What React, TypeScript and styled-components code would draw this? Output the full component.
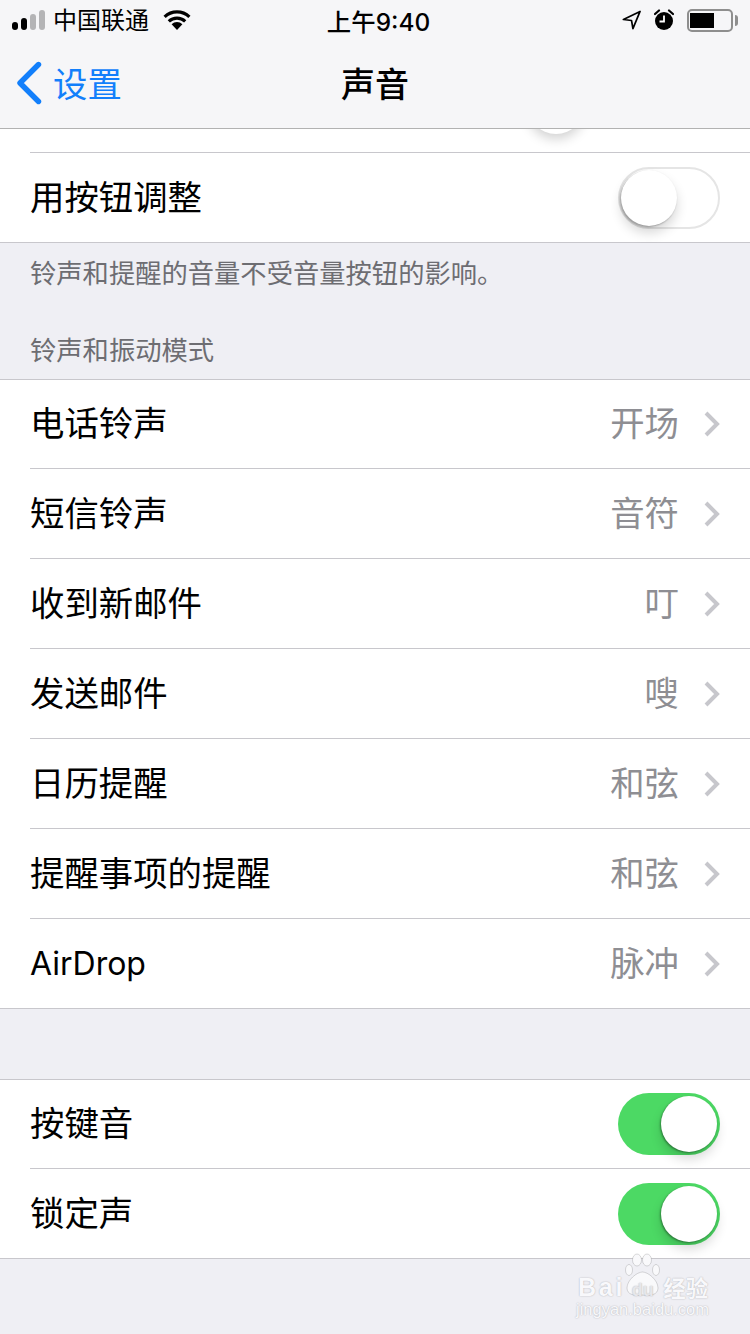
import React from 'react';
import styled, { createGlobalStyle } from 'styled-components';

const CJK = '"Noto Sans CJK SC", "Noto Sans", sans-serif';
const LATIN = 'Inter, "Noto Sans CJK SC", sans-serif';

const GlobalStyle = createGlobalStyle`
  html, body { margin: 0; padding: 0; }
  body { background: #efeff4; font-family: ${CJK}; }
`;

const Page = styled.div`
  position: relative;
  width: 750px;
  height: 1334px;
  overflow: hidden;
  background: #efeff4;
  color: #000;
`;

const TopBar = styled.header`
  height: 128px;
  background: #f6f6f8;
  border-bottom: 1px solid #b2b2b2;
  position: relative;
  z-index: 2;
`;

const StatusBar = styled.div`
  height: 40px;
  display: grid;
  grid-template-columns: 1fr auto 1fr;
  align-items: center;
  padding: 0 14px 0 12px;
`;

const StatusLeft = styled.div`
  display: flex;
  align-items: center;
  gap: 8px;
`;

const StatusRight = styled.div`
  display: flex;
  align-items: center;
  justify-content: flex-end;
  gap: 13px;
`;

const Carrier = styled.span`
  font-size: 24px;
  line-height: 36px;
  margin: -2px 6px 0 0;
`;

const Clock = styled.span`
  font-family: ${LATIN};
  font-size: 24.4px;
  line-height: 34px;
  font-weight: 500;
  margin: 4px 0 0 9px;
`;

const SignalBars = styled.div`
  display: flex;
  align-items: flex-end;
  gap: 3px;
  height: 20px;
`;

const SignalBar = styled.i<{ $h: number; $on: boolean }>`
  display: block;
  width: 6px;
  height: ${p => p.$h}px;
  border-radius: 3px;
  background: ${p => (p.$on ? '#000' : '#b4b4b6')};
`;

const Battery = styled.div`
  width: 46px;
  height: 23px;
  box-sizing: border-box;
  border: 2px solid #8e8e8e;
  border-radius: 5px;
  padding: 2px 1px;
  position: relative;
  margin-right: 3px;
  &::after {
    content: '';
    position: absolute;
    right: -7px;
    top: 4px;
    width: 3px;
    height: 11px;
    background: #8e8e8e;
    border-radius: 0 3px 3px 0;
  }
`;

const BatteryLevel = styled.div`
  width: 24px;
  height: 100%;
  background: #000;
`;

const NavBar = styled.nav`
  height: 88px;
  display: grid;
  grid-template-columns: 1fr auto 1fr;
  align-items: center;
`;

const BackLink = styled.a`
  display: flex;
  align-items: center;
  gap: 11px;
  padding-left: 16px;
  margin-top: -2px;
  color: #127ffb;
  font-size: 34.4px;
  line-height: 84px;
`;

const BackText = styled.span`
  margin-top: -2px;
`;

const Title = styled.h1`
  margin: -2px 0 0;
  font-size: 34px;
  line-height: 84px;
  font-weight: 500;
`;

const Group = styled.section`
  position: relative;
  background: #fff;
  border-bottom: 1px solid #c8c7cc;
`;

const TopGroup = styled(Group)`
  padding-top: 23px;
`;

const ListGroup = styled(Group)`
  border-top: 1px solid #c8c7cc;
`;

const PeekKnob = styled.div`
  position: absolute;
  left: 527px;
  top: -53px;
  width: 58px;
  height: 58px;
  border-radius: 50%;
  background: #fff;
  box-shadow: 0 5px 12px rgba(0, 0, 0, 0.18);
`;

const Row = styled.div<{ $first?: boolean }>`
  height: ${p => (p.$first ? 88 : 89)}px;
  margin-left: 30px;
  padding-right: 30px;
  display: flex;
  align-items: center;
  justify-content: space-between;
  border-top: ${p => (p.$first ? 'none' : '1px solid #c8c7cc')};
`;

const Label = styled.span`
  font-size: 34.4px;
  line-height: 48px;
  margin-top: -6px;
`;

const LatinLabel = styled(Label)`
  font-family: ${LATIN};
  font-size: 32px;
  margin-top: 0;
`;

const Detail = styled.div`
  display: flex;
  align-items: center;
  gap: 23px;
`;

const Value = styled.span`
  font-size: 34.4px;
  line-height: 48px;
  color: #8e8e93;
  margin-top: -6px;
`;

const SwitchTrack = styled.div<{ $on: boolean }>`
  position: relative;
  width: 102px;
  height: 62px;
  box-sizing: border-box;
  border-radius: 31px;
  background: ${p => (p.$on ? '#4cd964' : '#fff')};
  border: ${p => (p.$on ? 'none' : '2px solid #e5e5e5')};
`;

const SwitchKnob = styled.div<{ $on: boolean }>`
  position: absolute;
  top: ${p => (p.$on ? 3 : 1)}px;
  ${p => (p.$on ? 'right: 3px;' : 'left: 1px;')}
  width: 56px;
  height: 56px;
  border-radius: 50%;
  background: #fff;
  box-shadow: -1px 1px 2px rgba(0, 0, 0, 0.35), 0 7px 12px rgba(0, 0, 0, 0.16);
`;

const Note = styled.p`
  margin: 0;
  padding: 10px 30px 0;
  height: 124px;
  box-sizing: border-box;
  font-size: 26.3px;
  line-height: 38px;
  color: #6d6d72;
`;

const SectionHeader = styled.h2`
  margin: -37px 0 0;
  padding: 0 30px;
  height: 49px;
  font-size: 26.3px;
  line-height: 38px;
  font-weight: 400;
  color: #6d6d72;
`;

const Spacer = styled.div`
  height: 70px;
`;

const Watermark = styled.div`
  position: absolute;
  left: 575px;
  top: 1252px;
  width: 136px;
  height: 68px;
  color: #f8f8fb;
  text-shadow: 0 0 1.5px rgba(0, 0, 0, 0.3);
  font-family: "Liberation Sans", sans-serif;
  z-index: 3;
`;

const WatermarkLine = styled.div`
  position: absolute;
  left: 3px;
  top: 18px;
  display: flex;
  align-items: center;
  white-space: nowrap;
  font-size: 25px;
  font-weight: 700;
  line-height: 28px;
  letter-spacing: 2.8px;
`;

const WatermarkDu = styled.span`
  position: relative;
  font-size: 18px;
  width: 35px;
  margin-right: 3px;
  margin-top: 6px;
  letter-spacing: 0;
  text-align: center;
  color: #e6e6ea;
`;

const WatermarkCn = styled.span`
  font-family: ${CJK};
  font-size: 22.5px;
  line-height: 26px;
  font-weight: 700;
  letter-spacing: 0;
`;

const WatermarkUrl = styled.div`
  position: absolute;
  left: 1px;
  top: 50px;
  font-size: 16.5px;
  line-height: 14px;
  white-space: nowrap;
`;

const PawSvg = styled.svg`
  position: absolute;
  left: 50px;
  top: 0;
`;

const Chevron = () => (
  <svg width="18" height="28" viewBox="0 0 18 28">
    <path d="M4 3 L15 14 L4 25" fill="none" stroke="#c7c7cc" strokeWidth="4" />
  </svg>
);

const WifiIcon = () => (
  <svg width="28" height="20" viewBox="0 0 28 20">
    <path d="M14 20 L8.6 14.2 A8 8 0 0 1 19.4 14.2 Z" fill="#000" />
    <path d="M5.8 11.4 A12 12 0 0 1 22.2 11.4" fill="none" stroke="#000" strokeWidth="3.2" />
    <path d="M1.6 6.8 A18 18 0 0 1 26.4 6.8" fill="none" stroke="#000" strokeWidth="3.2" />
  </svg>
);

const LocationIcon = () => (
  <svg width="19" height="20" viewBox="0 0 20 20">
    <path d="M19 1 L1.5 9.5 L10 10.5 L11.5 19 Z" fill="none" stroke="#000" strokeWidth="1.8" strokeLinejoin="round" />
  </svg>
);

const AlarmIcon = () => (
  <svg width="20" height="22" viewBox="0 0 20 22">
    <circle cx="10" cy="12" r="9" fill="#000" />
    <path d="M10 6.5 V12.5 H5.5" fill="none" stroke="#fff" strokeWidth="1.8" />
    <path d="M1 5 L5 1.5 M19 5 L15 1.5" stroke="#000" strokeWidth="2.2" strokeLinecap="round" />
  </svg>
);

const BackIcon = () => (
  <svg width="26" height="44" viewBox="0 0 26 44">
    <path d="M22.5 3.5 L4 22 L22.5 40.5" fill="none" stroke="#127ffb" strokeWidth="5.4" strokeLinecap="round" strokeLinejoin="round" />
  </svg>
);

const PawIcon = () => (
  <PawSvg width="36" height="46" viewBox="0 0 36 46">
    <g fill="#f9f9fb" stroke="rgba(0,0,0,0.14)" strokeWidth="1">
      <ellipse cx="4" cy="18" rx="3.5" ry="5.5" />
      <ellipse cx="12" cy="8" rx="4.5" ry="6" />
      <ellipse cx="22" cy="8" rx="4.5" ry="6" />
      <ellipse cx="31" cy="18" rx="3.5" ry="5.5" />
      <path d="M17.5 20 C23 20 33 28 33 36 C33 43 25 44 17.5 43 C10 44 2 43 2 36 C2 28 12 20 17.5 20 Z" />
    </g>
  </PawSvg>
);

const Toggle = ({ on }: { on: boolean }) => (
  <SwitchTrack $on={on}>
    <SwitchKnob $on={on} />
  </SwitchTrack>
);

const ringtones: [string, string][] = [
  ['电话铃声', '开场'],
  ['短信铃声', '音符'],
  ['收到新邮件', '叮'],
  ['发送邮件', '嗖'],
  ['日历提醒', '和弦'],
  ['提醒事项的提醒', '和弦'],
  ['AirDrop', '脉冲'],
];

export default function App() {
  return (
    <Page>
      <GlobalStyle />
      <TopBar>
        <StatusBar>
          <StatusLeft>
            <SignalBars>
              <SignalBar $h={8} $on />
              <SignalBar $h={12} $on />
              <SignalBar $h={16} $on={false} />
              <SignalBar $h={20} $on={false} />
            </SignalBars>
            <Carrier>中国联通</Carrier>
            <WifiIcon />
          </StatusLeft>
          <Clock>上午9:40</Clock>
          <StatusRight>
            <LocationIcon />
            <AlarmIcon />
            <Battery>
              <BatteryLevel />
            </Battery>
          </StatusRight>
        </StatusBar>
        <NavBar>
          <BackLink>
            <BackIcon />
            <BackText>设置</BackText>
          </BackLink>
          <Title>声音</Title>
        </NavBar>
      </TopBar>

      <TopGroup>
        <PeekKnob />
        <Row>
          <Label>用按钮调整</Label>
          <Toggle on={false} />
        </Row>
      </TopGroup>
      <Note>铃声和提醒的音量不受音量按钮的影响。</Note>
      <SectionHeader>铃声和振动模式</SectionHeader>

      <ListGroup>
        {ringtones.map(([name, value], i) => (
          <Row key={name} $first={i === 0}>
            {name === 'AirDrop' ? <LatinLabel>{name}</LatinLabel> : <Label>{name}</Label>}
            <Detail>
              <Value>{value}</Value>
              <Chevron />
            </Detail>
          </Row>
        ))}
      </ListGroup>

      <Spacer />

      <ListGroup>
        <Row $first>
          <Label>按键音</Label>
          <Toggle on />
        </Row>
        <Row>
          <Label>锁定声</Label>
          <Toggle on />
        </Row>
      </ListGroup>

      <Watermark>
        <PawIcon />
        <WatermarkLine>
          Bai
          <WatermarkDu>du</WatermarkDu>
          <WatermarkCn>经验</WatermarkCn>
        </WatermarkLine>
        <WatermarkUrl>jingyan.baidu.com</WatermarkUrl>
      </Watermark>
    </Page>
  );
}
